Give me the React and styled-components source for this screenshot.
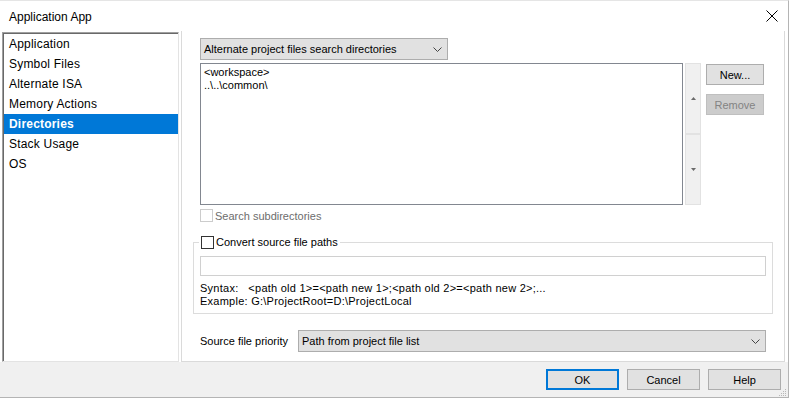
import React from 'react'
import styled, { createGlobalStyle } from 'styled-components'

const GlobalStyle = createGlobalStyle`
  html, body {
    margin: 0;
    padding: 0;
    background: #fff;
  }
  body {
    font-family: "Liberation Sans", Arial, sans-serif;
    font-size: 11px;
    color: #000;
  }
`

const Window = styled.div`
  position: relative;
  width: 789px;
  height: 398px;
  box-sizing: border-box;
  display: flex;
  flex-direction: column;
  background: #fff;
  border-top: 1px solid #e5e5e5;
  border-right: 1px solid #b4b4b4;
  border-bottom: 1px solid #b4b4b4;
  overflow: hidden;
`

const TitleBar = styled.div`
  height: 30px;
  flex: 0 0 30px;
  display: flex;
  align-items: center;
  justify-content: space-between;
  padding: 0 10px 0 9px;
  font-size: 12px;
`

const Title = styled.span`
  margin-top: 1px;
`

const Body = styled.div`
  flex: 0 0 331px;
  display: flex;
  padding: 0 3px 0 2px;
  gap: 2px;
`

const PageList = styled.ul`
  list-style: none;
  margin: 1px 0 0;
  padding: 1px 0 1px 1px;
  width: 177px;
  box-sizing: border-box;
  border: 1px solid;
  border-color: #a0a0a0 #e3e3e3 #e3e3e3 #a0a0a0;
  box-shadow: inset 1px 1px 0 #696969;
  font-size: 12px;
`

const PageItem = styled.li`
  height: 20px;
  line-height: 20px;
  padding-left: 5px;
  background: ${p => (p.$active ? '#0078d7' : 'transparent')};
  color: ${p => (p.$active ? '#fff' : '#000')};
  font-weight: ${p => (p.$active ? 'bold' : 'normal')};
  letter-spacing: 0.2px;
`

const Panel = styled.div`
  flex: 1;
  display: flex;
  flex-direction: column;
  box-sizing: border-box;
  border: 1px solid #dadada;
  border-top: none;
  padding: 7px 18px 0 18px;
`

const Combo = styled.div`
  box-sizing: border-box;
  width: ${p => p.$width}px;
  height: 22px;
  display: flex;
  align-items: center;
  justify-content: space-between;
  padding: 0 5px 0 3px;
  background: #e1e1e1;
  border: 1px solid #adadad;
  white-space: nowrap;
`

const ListRow = styled.div`
  display: flex;
  margin-top: 3px;
  height: 142px;
`

const ListBox = styled.div`
  flex: 0 0 483px;
  box-sizing: border-box;
  border: 1px solid #828790;
  padding: 2px 3px;
  line-height: 13px;
`

const ScrollBar = styled.div`
  flex: 0 0 16px;
  margin-left: 2px;
  display: flex;
  flex-direction: column;
`

const ScrollPart = styled.div`
  flex: 1;
  box-sizing: border-box;
  background: #f0f0f0;
  border: 1px solid #e2e2e2;
  display: flex;
  align-items: center;
  justify-content: center;
`

const SideButtons = styled.div`
  margin-left: 5px;
  padding-top: 1px;
  display: flex;
  flex-direction: column;
  gap: 9px;
`

const Button = styled.div`
  box-sizing: border-box;
  width: ${p => p.$width}px;
  height: 21px;
  display: flex;
  align-items: center;
  justify-content: center;
  background: ${p => (p.$disabled ? '#cccccc' : '#e1e1e1')};
  color: ${p => (p.$disabled ? '#838383' : '#000')};
  border: ${p => (p.$default ? '2px solid #0078d7' : p.$disabled ? '1px solid #bfbfbf' : '1px solid #adadad')};
`

const CheckRow = styled.label`
  display: flex;
  align-items: center;
  gap: 2px;
  height: 13px;
  margin-top: ${p => p.$top || 0}px;
  color: ${p => (p.$disabled ? '#6d6d6d' : '#000')};
`

const Box = styled.span`
  box-sizing: border-box;
  width: 13px;
  height: 13px;
  background: #fff;
  border: 1px solid ${p => (p.$disabled ? '#cccccc' : '#333333')};
`

const Group = styled.fieldset`
  margin: 14px -7px 0;
  padding: 7px 6px 5px;
  border: 1px solid #dcdcdc;
  min-width: 0;
`

const GroupLegend = styled.legend`
  padding: 0 2px;
  margin-left: -1px;
  line-height: 13px;
`

const TextInput = styled.div`
  box-sizing: border-box;
  height: 20px;
  border: 1px solid #d0d0d0;
  background: #fff;
`

const Hint = styled.div`
  margin-top: 6px;
  line-height: 13px;
  white-space: pre;
  letter-spacing: 0.25px;
`

const PriorityRow = styled.div`
  display: flex;
  align-items: center;
  margin-top: 16px;
`

const PriorityLabel = styled.span`
  width: 98px;
`

const Footer = styled.div`
  flex: 1;
  display: flex;
  justify-content: flex-end;
  align-items: flex-start;
  gap: 8px;
  padding: 7px 7px 0 0;
  background: #f0f0f0;
`

const Grip = styled.svg`
  position: absolute;
  right: 1px;
  bottom: 1px;
`

const Chevron = () => (
  <svg width="9" height="5" viewBox="0 0 9 5">
    <polyline points="0.5,0.5 4.5,4.5 8.5,0.5" fill="none" stroke="#444" strokeWidth="1" />
  </svg>
)

const Arrow = ({ up }) => (
  <svg width="5" height="3" viewBox="0 0 5 3">
    <polygon points={up ? '2.5,0 5,3 0,3' : '0,0 5,0 2.5,3'} fill="#6a6a6a" />
  </svg>
)

const pages = ['Application', 'Symbol Files', 'Alternate ISA', 'Memory Actions', 'Directories', 'Stack Usage', 'OS']

export default function App() {
  return (
    <>
      <GlobalStyle />
      <Window>
        <TitleBar>
          <Title>Application App</Title>
          <svg width="12" height="12" viewBox="0 0 12 12">
            <path d="M0.5 0.5 L11.5 11.5 M11.5 0.5 L0.5 11.5" stroke="#000" strokeWidth="1" />
          </svg>
        </TitleBar>
        <Body>
          <PageList>
            {pages.map(p => (
              <PageItem key={p} $active={p === 'Directories'}>{p}</PageItem>
            ))}
          </PageList>
          <Panel>
            <Combo $width={248}>
              <span>Alternate project files search directories</span>
              <Chevron />
            </Combo>
            <ListRow>
              <ListBox>
                <div>&lt;workspace&gt;</div>
                <div>..\..\common\</div>
              </ListBox>
              <ScrollBar>
                <ScrollPart><Arrow up /></ScrollPart>
                <ScrollPart><Arrow /></ScrollPart>
              </ScrollBar>
              <SideButtons>
                <Button $width={58}>New...</Button>
                <Button $width={58} $disabled>Remove</Button>
              </SideButtons>
            </ListRow>
            <CheckRow $top={4} $disabled>
              <Box $disabled />
              <span>Search subdirectories</span>
            </CheckRow>
            <Group>
              <GroupLegend>
                <CheckRow>
                  <Box />
                  <span>Convert source file paths</span>
                </CheckRow>
              </GroupLegend>
              <TextInput />
              <Hint>{'Syntax:   <path old 1>=<path new 1>;<path old 2>=<path new 2>;...\nExample: G:\\ProjectRoot=D:\\ProjectLocal'}</Hint>
            </Group>
            <PriorityRow>
              <PriorityLabel>Source file priority</PriorityLabel>
              <Combo $width={468}>
                <span>Path from project file list</span>
                <Chevron />
              </Combo>
            </PriorityRow>
          </Panel>
        </Body>
        <Footer>
          <Button $width={73} $default>OK</Button>
          <Button $width={73}>Cancel</Button>
          <Button $width={73}>Help</Button>
        </Footer>
        <Grip width="8" height="8" viewBox="0 0 8 8">
          <g fill="#b8b8b8">
            <rect x="6" y="1" width="1" height="1" />
            <rect x="4" y="3" width="1" height="1" />
            <rect x="6" y="3" width="1" height="1" />
            <rect x="2" y="5" width="1" height="1" />
            <rect x="4" y="5" width="1" height="1" />
            <rect x="6" y="5" width="1" height="1" />
            <rect x="0" y="7" width="1" height="1" />
            <rect x="2" y="7" width="1" height="1" />
            <rect x="4" y="7" width="1" height="1" />
            <rect x="6" y="7" width="1" height="1" />
          </g>
        </Grip>
      </Window>
    </>
  )
}
